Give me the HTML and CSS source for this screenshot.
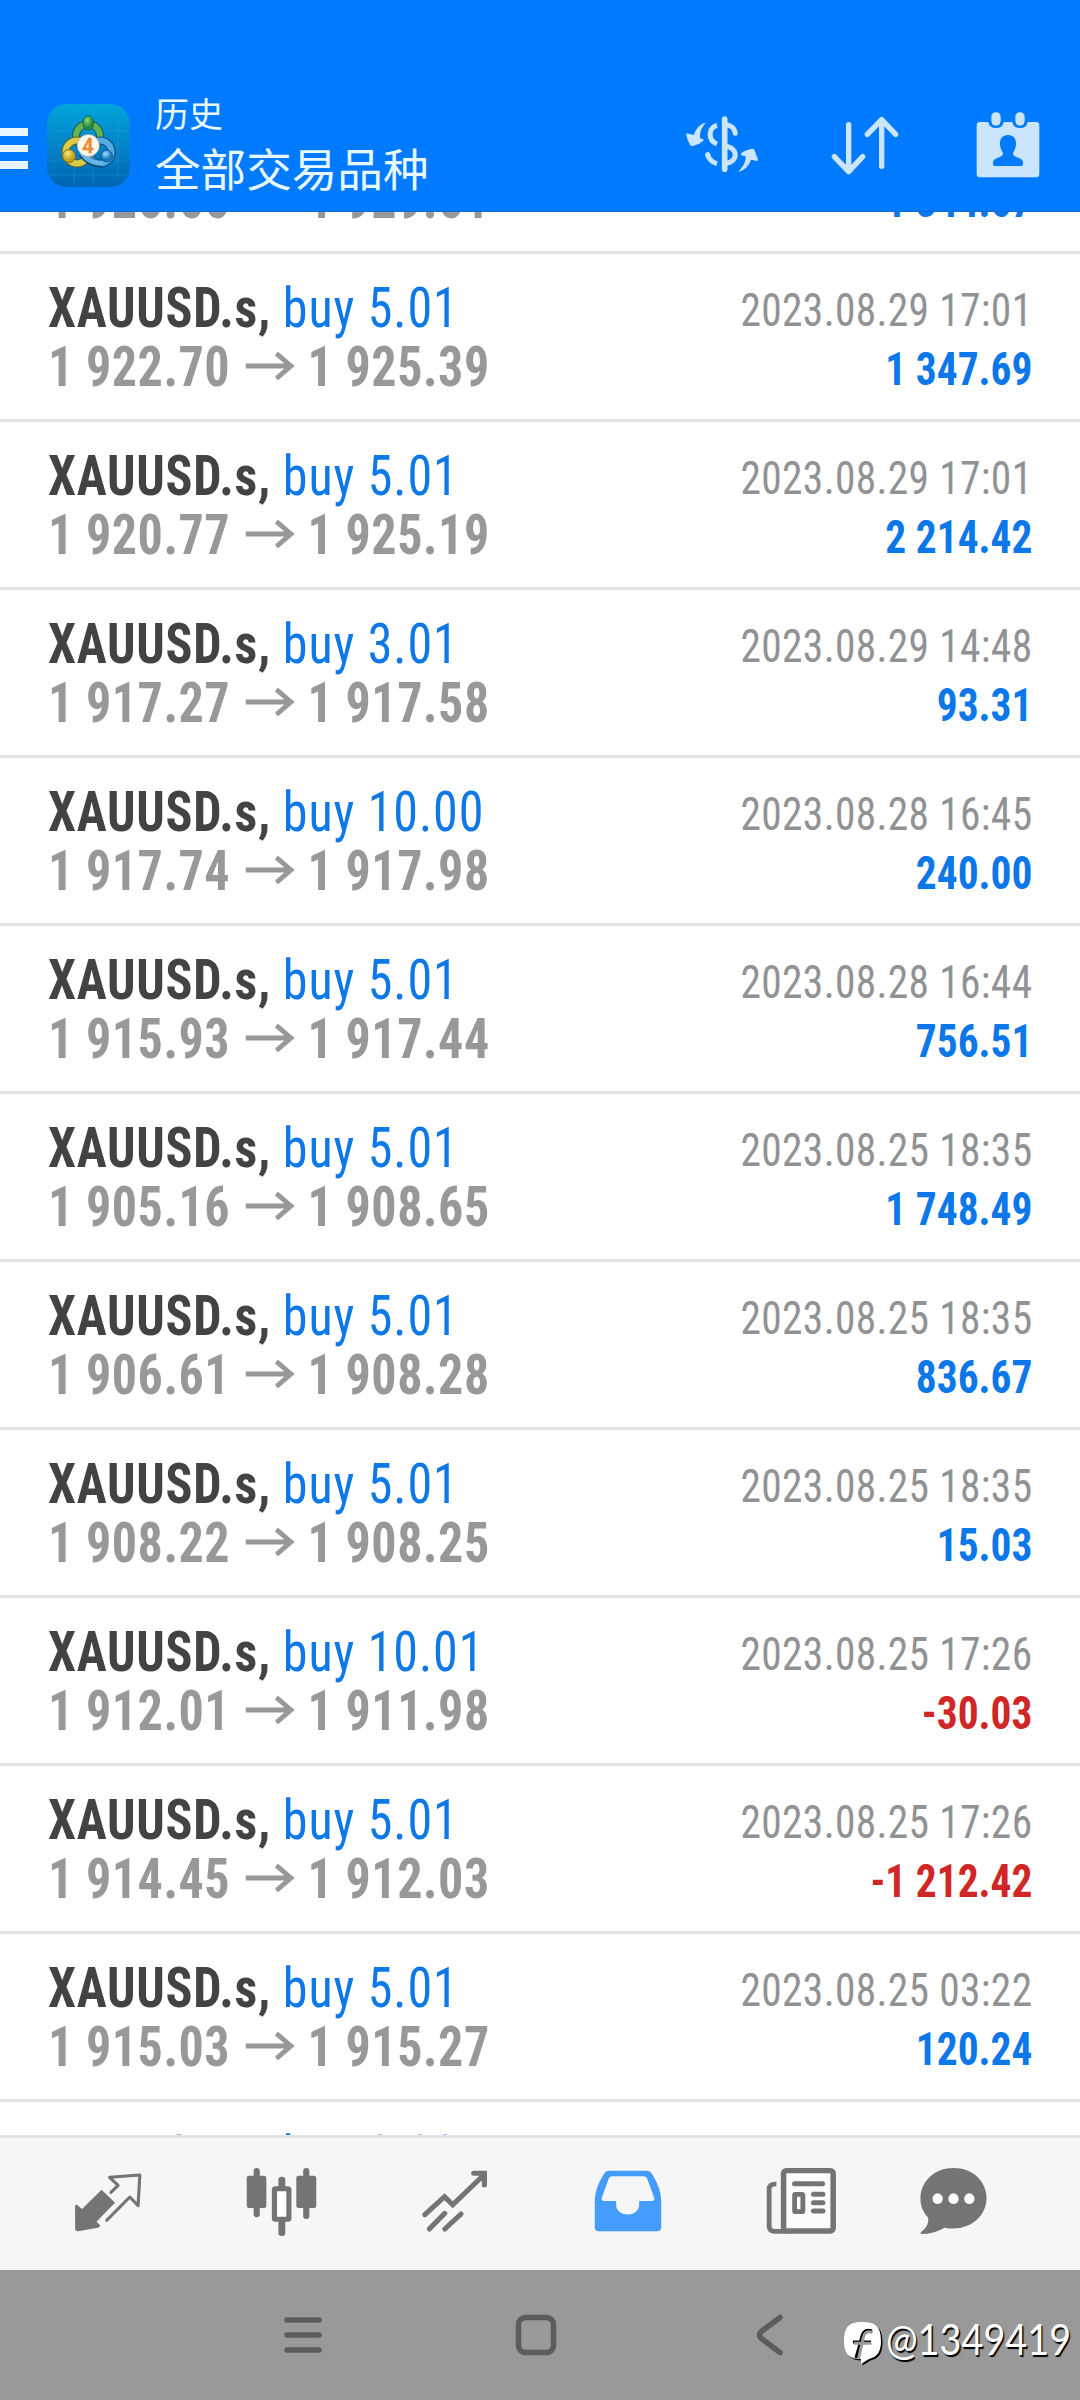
FILE: index.html
```html
<!DOCTYPE html>
<html lang="zh-CN">
<head>
<meta charset="utf-8">
<title>历史</title>
<link rel="stylesheet" href="styles.css">
</head>
<body>
<svg class="defs" width="0" height="0" aria-hidden="true">
  <symbol id="arrow" viewBox="0 0 54 28" preserveAspectRatio="none">
    <path d="M0 14H50M34 1.500L50 14L34 26.500" fill="none" stroke="#96989a" stroke-width="5"/>
  </symbol>
</svg>

<header class="bar">
  <div class="burger"><i></i><i></i><i></i></div>
  <svg class="logo" viewBox="0 0 83 83">
    <defs>
      <linearGradient id="bg" x1="0" y1="0" x2="0" y2="1"><stop offset="0" stop-color="#00a4dc"/><stop offset=".5" stop-color="#0484c8"/><stop offset="1" stop-color="#0064b4"/></linearGradient>
      <radialGradient id="g" cx=".4" cy=".3"><stop offset="0" stop-color="#8fd680"/><stop offset="1" stop-color="#258a37"/></radialGradient>
      <radialGradient id="y" cx=".4" cy=".3"><stop offset="0" stop-color="#f9ea7c"/><stop offset="1" stop-color="#c4a11c"/></radialGradient>
      <radialGradient id="b" cx=".4" cy=".3"><stop offset="0" stop-color="#9bdcfb"/><stop offset="1" stop-color="#1478bd"/></radialGradient>
    </defs>
    <rect width="83" height="83" rx="20" fill="url(#bg)"/>
    <path d="M27 2V81M71 8V75M2 27H81M2 57H81M46 2V81M2 71H81" stroke="#39b4e6" stroke-opacity=".25" fill="none"/>
    <g fill="none">
      <circle cx="41" cy="32" r="12" stroke="#1c5a4c" stroke-width="8"/>
      <circle cx="41" cy="32" r="12" stroke="#62b554" stroke-width="6"/>
      <circle cx="53" cy="48" r="11.500" stroke="#0c4c80" stroke-width="8"/>
      <circle cx="53" cy="48" r="11.500" stroke="#52abe0" stroke-width="6"/>
      <circle cx="30" cy="48" r="11.500" stroke="#5c6232" stroke-width="8"/>
      <circle cx="30" cy="48" r="11.500" stroke="#dccb48" stroke-width="6"/>
      <path d="M35 50C40 57 47 60 56 60" stroke="#0c4c80" stroke-width="7"/>
      <path d="M35 49C40 56 47 59.500 56 59.500" stroke="#62b7e8" stroke-width="5"/>
    </g>
    <ellipse cx="41.300" cy="19" rx="5.500" ry="7" fill="url(#g)" stroke="#1c6a3c"/>
    <circle cx="22" cy="52" r="6.500" fill="url(#y)" stroke="#7a6c22"/>
    <circle cx="59.700" cy="52" r="5.800" fill="url(#b)" stroke="#125c94"/>
    <circle cx="41.300" cy="41.500" r="11" fill="#faf6f0" stroke="#b8a898" stroke-width=".7"/>
    <text class="logo-num" x="41" y="48.500">4</text>
  </svg>
  <div class="titles"><div class="sub">历史</div><h1>全部交易品种</h1></div>
  <svg class="ic-dollar" viewBox="135 105 222 174">
    <g fill="none" stroke="#cce5ff" stroke-width="15">
      <path d="M254 117V268" stroke-width="17" stroke-linecap="round"/>
      <path d="M260 134C274 137 284 145 286 160" stroke-linecap="round"/>
      <path d="M231 136C204 143 203 181 231 192"/>
      <path d="M255 199C294 201 298 245 255 251"/>
      <path d="M203 224C207 238 217 247 231 251"/>
      <path d="M203 224L203.500 226" stroke-linecap="round"/>
    </g>
    <path d="M197 128C182 131 169 143 161 165L140 160C136 163 145 186 151 196Q154 199 160 197Q177 194 190 182C194 179 186 177 180 175C179 157 184 142 197 129ZM297 275C312 271 327 258 333 239L351 243Q356 242 352 233L343 209Q340 205 333 207C321 209 309 214 303 221C300 226 311 227 317 229C318 245 310 259 296 274Z" fill="#cce5ff"/>
  </svg>
  <svg class="ic-sort" viewBox="570 105 210 183">
    <path d="M626 134V274M583 230L626 275L668 230M725 259V121M682 163L725 119L767 163" fill="none" stroke="#cce5ff" stroke-width="16" stroke-linecap="round" stroke-linejoin="round"/>
  </svg>
  <svg class="ic-cal" viewBox="1005 93 198 204">
    <path fill="#cce5ff" d="M1020 126H1045Q1048 144 1068 144T1091 126H1117Q1120 144 1140 144T1163 126H1188Q1198 126 1198 136V282Q1198 292 1188 292H1020Q1010 292 1010 282V136Q1010 126 1020 126Z"/>
    <rect x="1054" y="97" width="28" height="40" rx="13" fill="#cce5ff"/><rect x="1126" y="97" width="28" height="40" rx="13" fill="#cce5ff"/>
    <path fill="none" stroke="#007aff" stroke-width="5" d="M1051.500 124V126Q1053 140 1068 140T1084.500 126V124M1123.500 124V126Q1125 140 1140 140T1156.500 126V124"/>
    <path fill="#007aff" d="M1104 165C1122 165 1129 178 1128 194C1127 207 1121 214 1119 220C1117 233 1149 232 1149 247V253Q1149 258 1143 258H1065Q1059 258 1059 253V247C1059 232 1091 233 1089 220C1087 214 1081 207 1080 194C1079 178 1086 165 1104 165Z"/>
  </svg>
</header>

<main class="list">
  <section class="deal"><div class="l"><p class="t"></p><p class="p"><span>1 926.66</span><svg><use href="#arrow"/></svg><span>1 929.61</span></p></div><div class="r"><p class="d"></p><p class="v">1 344.67</p></div></section>
  <section class="deal"><div class="l"><p class="t"><b>XAUUSD.s,</b><span>buy 5.01</span></p><p class="p"><span>1 922.70</span><svg><use href="#arrow"/></svg><span>1 925.39</span></p></div><div class="r"><p class="d">2023.08.29 17:01</p><p class="v">1 347.69</p></div></section>
  <section class="deal"><div class="l"><p class="t"><b>XAUUSD.s,</b><span>buy 5.01</span></p><p class="p"><span>1 920.77</span><svg><use href="#arrow"/></svg><span>1 925.19</span></p></div><div class="r"><p class="d">2023.08.29 17:01</p><p class="v">2 214.42</p></div></section>
  <section class="deal"><div class="l"><p class="t"><b>XAUUSD.s,</b><span>buy 3.01</span></p><p class="p"><span>1 917.27</span><svg><use href="#arrow"/></svg><span>1 917.58</span></p></div><div class="r"><p class="d">2023.08.29 14:48</p><p class="v">93.31</p></div></section>
  <section class="deal"><div class="l"><p class="t"><b>XAUUSD.s,</b><span>buy 10.00</span></p><p class="p"><span>1 917.74</span><svg><use href="#arrow"/></svg><span>1 917.98</span></p></div><div class="r"><p class="d">2023.08.28 16:45</p><p class="v">240.00</p></div></section>
  <section class="deal"><div class="l"><p class="t"><b>XAUUSD.s,</b><span>buy 5.01</span></p><p class="p"><span>1 915.93</span><svg><use href="#arrow"/></svg><span>1 917.44</span></p></div><div class="r"><p class="d">2023.08.28 16:44</p><p class="v">756.51</p></div></section>
  <section class="deal"><div class="l"><p class="t"><b>XAUUSD.s,</b><span>buy 5.01</span></p><p class="p"><span>1 905.16</span><svg><use href="#arrow"/></svg><span>1 908.65</span></p></div><div class="r"><p class="d">2023.08.25 18:35</p><p class="v">1 748.49</p></div></section>
  <section class="deal"><div class="l"><p class="t"><b>XAUUSD.s,</b><span>buy 5.01</span></p><p class="p"><span>1 906.61</span><svg><use href="#arrow"/></svg><span>1 908.28</span></p></div><div class="r"><p class="d">2023.08.25 18:35</p><p class="v">836.67</p></div></section>
  <section class="deal"><div class="l"><p class="t"><b>XAUUSD.s,</b><span>buy 5.01</span></p><p class="p"><span>1 908.22</span><svg><use href="#arrow"/></svg><span>1 908.25</span></p></div><div class="r"><p class="d">2023.08.25 18:35</p><p class="v">15.03</p></div></section>
  <section class="deal"><div class="l"><p class="t"><b>XAUUSD.s,</b><span>buy 10.01</span></p><p class="p"><span>1 912.01</span><svg><use href="#arrow"/></svg><span>1 911.98</span></p></div><div class="r"><p class="d">2023.08.25 17:26</p><p class="v loss">-30.03</p></div></section>
  <section class="deal"><div class="l"><p class="t"><b>XAUUSD.s,</b><span>buy 5.01</span></p><p class="p"><span>1 914.45</span><svg><use href="#arrow"/></svg><span>1 912.03</span></p></div><div class="r"><p class="d">2023.08.25 17:26</p><p class="v loss">-1 212.42</p></div></section>
  <section class="deal"><div class="l"><p class="t"><b>XAUUSD.s,</b><span>buy 5.01</span></p><p class="p"><span>1 915.03</span><svg><use href="#arrow"/></svg><span>1 915.27</span></p></div><div class="r"><p class="d">2023.08.25 03:22</p><p class="v">120.24</p></div></section>
  <section class="deal"><div class="l"><p class="t"><b>XAUUSD.s,</b><span>buy 3.00</span></p></div></section>
</main>

<nav class="tabs">
  <svg viewBox="210 255 210 216" preserveAspectRatio="none"><path d="M296 329L335 368L281 425L292 436Q292 442 285 443L228 454Q219 455 219 445V378Q220 372 225 375L239 387Z" fill="#747474"/><path d="M323 337L344 316L319 292L407 285L402 377L378 351L311 421" fill="none" stroke="#747474" stroke-width="9" stroke-linecap="round" stroke-linejoin="round"/></svg>
  <svg viewBox="710 255 210 216" preserveAspectRatio="none"><g fill="#747474"><rect x="735" y="264" width="18" height="148" rx="9"/><rect x="715" y="287" width="57" height="97" rx="7"/><rect x="879" y="264" width="18" height="153" rx="9"/><rect x="859" y="287" width="58" height="97" rx="7"/><rect x="807" y="290" width="20" height="40" rx="9"/><rect x="807" y="400" width="20" height="68" rx="9"/></g><rect x="795.500" y="326" width="42" height="92" rx="3" fill="#fff" stroke="#747474" stroke-width="15"/></svg>
  <svg viewBox="1215 255 210 216" preserveAspectRatio="none"><path d="M1232 404L1289 350L1313 374L1404 284M1374 280H1405V315M1245 447L1290 400M1290 447L1337 402" fill="none" stroke="#747474" stroke-width="15" stroke-linecap="round"/></svg>
  <svg viewBox="150 255 210 216" preserveAspectRatio="none"><path fill="#449dfc" fill-rule="evenodd" d="M200 272H310Q319 272 324 281Q351 325 351 361V442Q351 454 339 454H170Q158 454 158 442V361Q158 325 185 281Q190 272 200 272ZM208 289Q202 289 199 295L178 355Q177 363 184 363H220V374C221 413 286 413 287 374V363H325Q332 363 331 355L311 298Q308 289 300 289Z"/></svg>
  <svg viewBox="652 255 210 216" preserveAspectRatio="none"><g fill="none" stroke="#747474"><rect x="706" y="272" width="144" height="181" rx="8" fill="#fcfcfc" stroke-width="16"/><path d="M685 312Q665 311 664 326V438Q665 454 680 454H715" stroke-width="14"/><path d="M738 311H819M793 343H820M793 368H820M793 393H820" stroke-width="15" stroke-linecap="round"/><rect x="738" y="343" width="24" height="52" rx="3" stroke-width="14"/></g></svg>
  <svg viewBox="1093 255 210 216" preserveAspectRatio="none"><path fill="#747474" d="M1199 264C1255 264 1295 304 1295 355C1295 411 1241 458 1173 443C1152 455 1129 462 1107 462Q1100 460 1107 454C1123 443 1129 423 1124 411C1109 395 1103 377 1103 355C1103 304 1145 264 1199 264Z"/><g fill="#fcfcfc"><ellipse cx="1153" cy="356" rx="15" ry="16"/><ellipse cx="1199" cy="356" rx="15" ry="16"/><ellipse cx="1245" cy="356" rx="15" ry="16"/></g></svg>
</nav>

<footer class="sys">
  <svg class="s-menu" viewBox="0 0 40 40"><path d="M4 5H36M4 20H36M4 35H36"/></svg>
  <svg class="s-home" viewBox="0 0 42 42"><rect x="3.500" y="3.500" width="35" height="35" rx="7"/></svg>
  <svg class="s-back" viewBox="0 0 28 42"><path d="M24 3.500L6 17Q1 21 6 25L24 38.500"/></svg>
  <div class="mark">
    <svg viewBox="0 0 40 46">
      <path d="M19 1C33 1 38 6 38 20C38 31 34 36 26 38L18 43L18 38C5 38 1 32 1 20C1 6 6 1 19 1Z" fill="#000" transform="translate(1.500 1.500)"/>
      <path d="M19 1C33 1 38 6 38 20C38 31 34 36 26 38L18 43L18 38C5 38 1 32 1 20C1 6 6 1 19 1Z" fill="#fff"/>
      <path d="M29 10C21 7 19 13 18 19L13 37M10 21H28" fill="none" stroke="#000" stroke-width="3"/>
      <path d="M29.500 11.500C22 9 20.500 14 19.500 20L15.500 38M11 22.200H28.500" fill="none" stroke="#999" stroke-width="3"/>
    </svg>
    <span>@1349419</span>
  </div>
</footer>
</body>
</html>
```
FILE: styles.css
```css
* { box-sizing: border-box; }
body { margin: 0; width: 1080px; height: 2400px; overflow: hidden; display: flex; flex-direction: column; background: #fff; font-family: Roboto, "Noto Sans CJK SC", sans-serif; }
p, h1 { margin: 0; }
svg { flex: none; display: block; }
.defs { position: absolute; }

.bar { flex: none; height: 212px; display: flex; align-items: flex-start; background: #007aff; border-bottom: 1px solid #0a6bd4; }
.burger { width: 28px; margin-top: 128px; display: flex; flex-direction: column; gap: 9px; }
.burger i { height: 7.5px; background: #e8f7ff; }
.logo { width: 83px; height: 83px; margin: 104px 0 0 19px; }
.logo-num { font: 500 20px Roboto, sans-serif; fill: #f08a2c; stroke: #f08a2c; stroke-width: .5px; text-anchor: middle; }
.titles { margin: 96px 0 0 25px; width: 530px; color: #e8f8ff; font-family: "Noto Sans CJK SC", sans-serif; }
.sub { font-size: 34px; line-height: 34px; }
.titles h1 { margin-top: 14px; font-size: 45.6px; line-height: 46px; font-weight: 400; }
.ic-dollar { width: 74px; height: 58px; margin-top: 115px; }
.ic-sort { width: 70px; height: 61px; margin: 115px 0 0 71px; }
.ic-cal { width: 66px; height: 68px; margin: 111px 0 0 75px; }

.list { flex: none; height: 1923px; overflow: hidden; }
.deal { height: 168px; padding: 25px 48px 0; border-bottom: 3px solid #e4e4e4; display: flex; justify-content: space-between; white-space: nowrap; font-stretch: 75%; }
.deal:first-child { margin-top: -126px; }
.deal p { display: flex; height: 59px; line-height: 59px; }
.l { font-size: 55px; transform: scaleX(.91); transform-origin: left; }
.r { font-size: 46px; padding-top: 2px; transform: scaleX(.9); transform-origin: right; }
.r p { justify-content: flex-end; }
.t b { color: #434343; letter-spacing: .8px; }
.t span { margin-left: 13px; color: #1078e6; letter-spacing: 1px; }
.p { color: #96989a; font-weight: 700; letter-spacing: .6px; }
.p svg { width: 54px; height: 28px; margin: 14px 14px 0 17px; }
.d { color: #909294; letter-spacing: .4px; }
.v { color: #0c77e8; font-weight: 700; }
.loss { color: #d02626; }

.tabs { flex: none; height: 135px; border-top: 3px solid #e4e4e4; background: #f6f6f6; display: flex; gap: 101px; padding: 27px 0 0 72px; }
.tabs svg { width: 72.3px; height: 72px; }
.tabs svg:last-child { margin-left: -21px; }

.sys { flex: none; height: 130px; background: #999; display: flex; align-items: flex-start; }
.sys > svg { fill: none; stroke: #5c5c5c; stroke-width: 5.5; stroke-linecap: round; }
.s-menu { width: 40px; height: 40px; margin: 45px 0 0 283px; }
.s-home { width: 42px; height: 42px; margin: 44px 0 0 192px; }
.s-back { width: 28px; height: 42px; margin: 44px 0 0 199px; }
.mark { display: flex; margin: 51px 0 0 59px; color: #fff; }
.mark svg { width: 40px; height: 46px; }
.mark span { font: 400 42px/42px Lato, sans-serif; margin-left: 3px; margin-top: -3px; text-shadow: 1.5px 1.5px 1px #000; transform: scaleX(.9); transform-origin: left; }
```
